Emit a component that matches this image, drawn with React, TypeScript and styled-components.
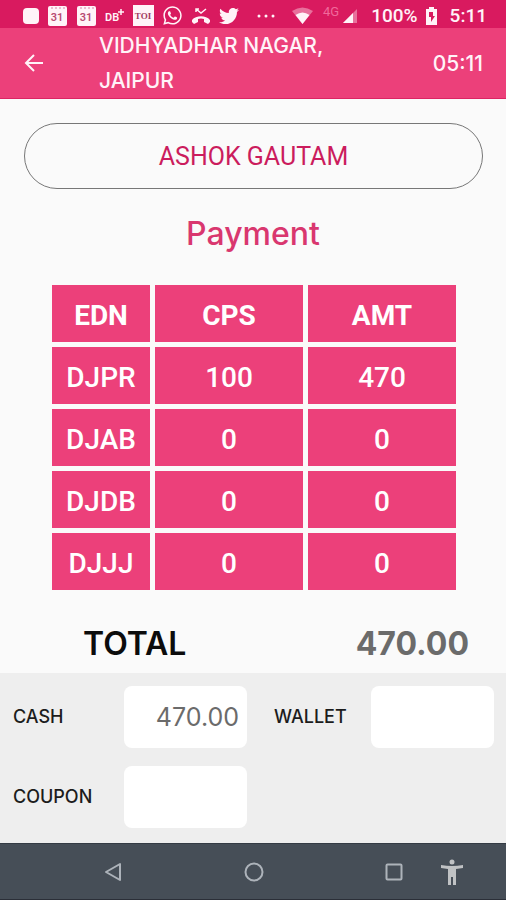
import React from "react";
import styled, { createGlobalStyle } from "styled-components";
import { FaTwitter, FaWhatsapp } from "react-icons/fa";

const display = `Inter, "Open Sans", sans-serif`;
const body = `Roboto, "Liberation Sans", sans-serif`;

const GlobalStyle = createGlobalStyle`
  *, *::before, *::after { box-sizing: border-box; }
  body { margin: 0; background: #fafafa; font-family: ${body}; }
  button, input { font: inherit; }
`;

const Screen = styled.div`
  min-height: 100vh;
  display: flex;
  flex-direction: column;
  background: #fafafa;
`;

const StatusBar = styled.div`
  min-height: 28px;
  flex: none;
  display: flex;
  align-items: center;
  padding: 3px 19px 0 22px;
  background: #d91a5f;
  color: #fff3f8;
  font-size: 19px;
  line-height: 25px;
  font-weight: 500;
`;

const Notifications = styled.div`
  display: flex;
  align-items: center;
  gap: 8px;
`;

const Indicators = styled.div`
  display: flex;
  align-items: center;
  margin-left: auto;
`;

const Network = styled.span`
  align-self: flex-start;
  margin: 0 4px 0 10px;
  font-size: 13px;
  line-height: 18px;
  font-weight: 400;
  color: #f0699b;
`;

const Percent = styled.span`
  margin: 0 8px 0 14px;
`;

const Clock = styled.span`
  margin-left: 13px;
`;

const AppBar = styled.header`
  display: flex;
  align-items: center;
  padding: 0 23px;
  background: #ec407a;
  border-bottom: 1px solid #dc2563;
  color: #fff3f8;
  font-family: ${display};
  font-size: 21px;
  font-weight: 500;
`;

const BackButton = styled.button`
  display: flex;
  padding: 0;
  border: 0;
  background: none;
  color: inherit;
  cursor: pointer;
`;

const Place = styled.h1`
  flex: 1;
  max-width: 260px;
  margin: 0 auto 0 54px;
  font-size: 21px;
  line-height: 35px;
  font-weight: 500;
`;

const Main = styled.main`
  flex: 1;
  display: flex;
  flex-direction: column;
`;

const NameButton = styled.button`
  height: 66px;
  margin: 24px 23px 0 24px;
  border: 1px solid #777;
  border-radius: 33px;
  background: #fafafa;
  color: #cb1c5d;
  font-size: 25px;
  cursor: pointer;
`;

const Heading = styled.h2`
  margin: 24px 0 26px;
  text-align: center;
  color: #d9376f;
  font-family: ${display};
  font-size: 32px;
  line-height: 41px;
  font-weight: 500;
`;

const TableArea = styled.div`
  padding: 0 45px 0 47px;
`;

const Table = styled.table`
  width: 100%;
  table-layout: fixed;
  border-collapse: separate;
  border-spacing: 5px;
  color: #fff;
  font-size: 28px;
  line-height: 32px;
`;

const NameColumn = styled.col`
  width: 98px;
`;

const HeadCell = styled.th`
  height: 57px;
  padding: 4px 0 0;
  background: #ec407a;
  font-weight: 700;
`;

const Cell = styled.td`
  height: 57px;
  padding: 4px 0 0;
  background: #ec407a;
  text-align: center;
  font-weight: 500;
`;

const Total = styled.div`
  display: flex;
  justify-content: space-between;
  align-items: center;
  padding: 28px 37px 8px 83px;
  font-family: ${display};
  font-size: 32px;
  line-height: 42px;
`;

const TotalLabel = styled.span`
  color: #0c0c0c;
  font-weight: 600;
`;

const TotalValue = styled.output`
  color: #6b6b6b;
  font-weight: 700;
`;

const PaymentForm = styled.form`
  flex: 1;
  display: grid;
  grid-template-columns: 1fr 1fr;
  align-content: start;
  row-gap: 18px;
  padding: 13px 12px 15px 0;
  background: #eee;
`;

const Field = styled.div<{ $indent: number }>`
  display: flex;
  align-items: center;
  justify-content: space-between;
  padding-left: ${(p) => p.$indent}px;
`;

const FieldLabel = styled.label`
  color: #1c1c1c;
  font-family: ${display};
  font-size: 18px;
  line-height: 24px;
  font-weight: 500;
`;

const FieldInput = styled.input`
  flex: none;
  width: 123px;
  height: 62px;
  padding: 0 8px;
  border: 0;
  border-radius: 8px;
  background: #fff;
  color: #6b6b6b;
  text-align: right;
  font-family: ${display};
  font-size: 25px;
`;

const NavBar = styled.nav`
  height: 57px;
  flex: none;
  display: grid;
  grid-template-columns: 86fr 54fr 87fr 54fr 86fr 54fr 4fr 54fr 27fr;
  align-items: center;
  border-top: 1px solid #343b44;
  border-bottom: 1px solid #2b2f38;
  background: #464e57;
`;

const NavButton = styled.button<{ $column: number }>`
  grid-row: 1;
  grid-column: ${(p) => p.$column};
  display: flex;
  justify-content: center;
  padding: 0;
  border: 0;
  background: none;
  color: #adb3ba;
  cursor: pointer;
`;

const AppSquare = () => (
  <svg width="17" height="18" viewBox="0 0 17 18" aria-hidden="true">
    <rect x="1" y="1" width="16" height="16" rx="4" fill="currentColor" />
  </svg>
);

const Calendar = () => (
  <svg width="21" height="22" viewBox="0 0 21 22" aria-hidden="true">
    <path d="M3 1h15q2 0 2 2v16q0 2-2 2H3q-2 0-2-2V3q0-2 2-2z" fill="currentColor" />
    <path d="M4 3h14" stroke="#dd7fa5" strokeWidth="1" strokeDasharray="2 2" />
    <text x="10" y="16" textAnchor="middle" fontFamily="Roboto" fontSize="11" fontWeight="600" fill="#b94a72">31</text>
  </svg>
);

const DbPlus = () => (
  <svg width="20" height="20" viewBox="0 0 20 20" aria-hidden="true">
    <text x="0" y="15" fontFamily="Roboto" fontSize="11" fontWeight="600" fill="currentColor">DB</text>
    <path d="M16 3v6M13 6h6" stroke="currentColor" strokeWidth="1.500" />
  </svg>
);

const Toi = () => (
  <svg width="21" height="21" viewBox="0 0 21 21" aria-hidden="true">
    <rect width="21" height="21" fill="currentColor" />
    <text x="10" y="14" textAnchor="middle" fontFamily="Liberation Serif" fontSize="9" fontWeight="700" fill="#a13a60">TOI</text>
  </svg>
);

const MissedCall = () => (
  <svg width="20" height="20" viewBox="0 0 20 20" fill="none" aria-hidden="true">
    <path d="M5 6V3h3M5 3l5 4 5-4" stroke="currentColor" strokeWidth="1.500" />
    <path d="M1 14C5 9 15 9 19 14v2l-2 2-4-2v-3q-3-1-6 0v3l-4 2-2-2z" fill="currentColor" />
  </svg>
);

const More = () => (
  <svg width="18" height="4" viewBox="0 0 18 4" fill="currentColor" aria-hidden="true">
    <circle cx="2" cy="2" r="1.5" />
    <circle cx="9" cy="2" r="1.5" />
    <circle cx="16" cy="2" r="1.5" />
  </svg>
);

const Wifi = () => (
  <svg width="21" height="17" viewBox="0 0 21 17" fill="currentColor" aria-hidden="true">
    <path d="M0 4q10.500-7 21 0L10.500 17z" opacity="0.4" />
    <path d="M3.500 8q7-5 14 0l-7 9z" />
  </svg>
);

const Signal = () => (
  <svg width="14" height="14" viewBox="0 0 14 14" fill="currentColor" aria-hidden="true">
    <path d="M14 0v14H0z" opacity="0.4" />
    <path d="M10 4v10H0z" />
  </svg>
);

const Battery = () => (
  <svg width="11" height="18" viewBox="0 0 11 18" aria-hidden="true">
    <path d="M3 0h5v2h3v16H0V2h3z" fill="currentColor" />
    <path d="M7 5v4h2l-4 6v-5H3V5z" fill="#d91a5f" />
  </svg>
);

const BackArrow = () => (
  <svg width="22" height="20" viewBox="0 0 22 20" fill="none" stroke="currentColor" strokeWidth="2" aria-hidden="true">
    <path d="M20 10H3M11 2l-8 8 8 8" />
  </svg>
);

const NavBack = () => (
  <svg width="18" height="20" viewBox="0 0 18 20" fill="none" stroke="currentColor" strokeWidth="2" aria-hidden="true">
    <path d="M16 2v16L2 10z" strokeLinejoin="round" />
  </svg>
);

const NavHome = () => (
  <svg width="20" height="20" viewBox="0 0 20 20" fill="none" stroke="currentColor" strokeWidth="2" aria-hidden="true">
    <circle cx="10" cy="10" r="8.500" />
  </svg>
);

const NavRecent = () => (
  <svg width="18" height="18" viewBox="0 0 18 18" fill="none" stroke="currentColor" strokeWidth="2" aria-hidden="true">
    <rect x="1.500" y="1.500" width="15" height="15" rx="1" />
  </svg>
);

const Person = () => (
  <svg width="22" height="26" viewBox="0 0 22 26" fill="#c0c2c4" aria-hidden="true">
    <circle cx="11" cy="3" r="2.500" />
    <path d="M0 6q11 2 22 0v3l-7 1v16h-3v-8h-2v8H7V10L0 9z" />
  </svg>
);

const rows = [
  ["DJPR", "100", "470"],
  ["DJAB", "0", "0"],
  ["DJDB", "0", "0"],
  ["DJJJ", "0", "0"],
];

const fields = [
  { id: "cash", label: "CASH", value: "470.00", indent: 13 },
  { id: "wallet", label: "WALLET", value: "", indent: 27 },
  { id: "coupon", label: "COUPON", value: "", indent: 13 },
];

export default function App() {
  return (
    <Screen>
      <GlobalStyle />
      <StatusBar>
        <Notifications>
          <AppSquare />
          <Calendar />
          <Calendar />
          <DbPlus />
          <Toi />
          <FaWhatsapp size={21} />
          <MissedCall />
          <FaTwitter size={20} />
        </Notifications>
        <Indicators>
          <More />
        </Indicators>
        <Indicators>
          <Wifi />
          <Network>4G</Network>
          <Signal />
          <Percent>100%</Percent>
          <Battery />
          <Clock>5:11</Clock>
        </Indicators>
      </StatusBar>
      <AppBar>
        <BackButton type="button" aria-label="Back">
          <BackArrow />
        </BackButton>
        <Place>VIDHYADHAR NAGAR, JAIPUR</Place>
        <time>05:11</time>
      </AppBar>
      <Main>
        <NameButton type="button">ASHOK GAUTAM</NameButton>
        <Heading>Payment</Heading>
        <TableArea>
          <Table>
            <colgroup>
              <NameColumn />
              <col />
              <col />
            </colgroup>
            <thead>
              <tr>
                <HeadCell scope="col">EDN</HeadCell>
                <HeadCell scope="col">CPS</HeadCell>
                <HeadCell scope="col">AMT</HeadCell>
              </tr>
            </thead>
            <tbody>
              {rows.map((row) => (
                <tr key={row[0]}>
                  {row.map((value, i) => (
                    <Cell key={i}>{value}</Cell>
                  ))}
                </tr>
              ))}
            </tbody>
          </Table>
        </TableArea>
        <Total>
          <TotalLabel>TOTAL</TotalLabel>
          <TotalValue>470.00</TotalValue>
        </Total>
        <PaymentForm>
          {fields.map((f) => (
            <Field key={f.id} $indent={f.indent}>
              <FieldLabel htmlFor={f.id}>{f.label}</FieldLabel>
              <FieldInput id={f.id} inputMode="decimal" defaultValue={f.value} />
            </Field>
          ))}
        </PaymentForm>
      </Main>
      <NavBar aria-label="System">
        <NavButton $column={2} type="button" aria-label="Back"><NavBack /></NavButton>
        <NavButton $column={4} type="button" aria-label="Home"><NavHome /></NavButton>
        <NavButton $column={6} type="button" aria-label="Recent apps"><NavRecent /></NavButton>
        <NavButton $column={8} type="button" aria-label="Accessibility"><Person /></NavButton>
      </NavBar>
    </Screen>
  );
}
